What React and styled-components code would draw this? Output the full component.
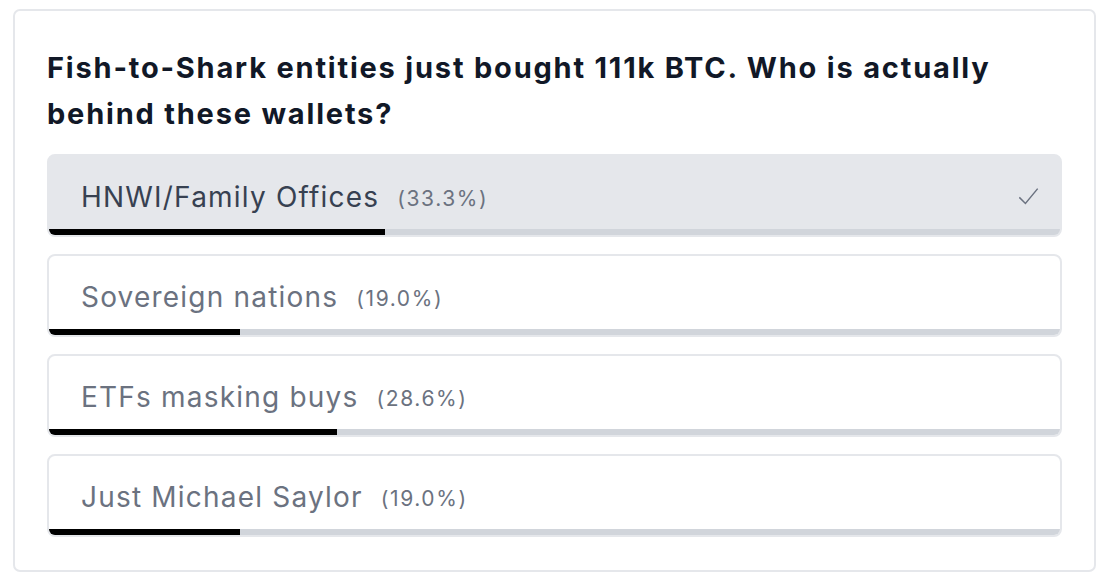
import React from 'react'
import styled, { createGlobalStyle } from 'styled-components'

const Global = createGlobalStyle`
    body {
        margin: 0;
        background: #fff;
        font-family: Inter, "Noto Sans", sans-serif;
    }
`;

const options = [
    { label: 'HNWI/Family Offices', pct: 33.3, chosen: true },
    { label: 'Sovereign nations', pct: 19.0 },
    { label: 'ETFs masking buys', pct: 28.6 },
    { label: 'Just Michael Saylor', pct: 19.0 },
];

export default function App() {
    return (
        <Page>
            <Global />
            <Card>
                <Title>Fish-to-Shark entities just bought 111k BTC. Who is actually behind these wallets?</Title>
                <List>
                    {options.map((o) => (
                        <Option key={o.label} chosen={o.chosen}>
                            <Row>
                                <Label chosen={o.chosen}>{o.label}</Label>
                                <Pct>({o.pct.toFixed(1)}%)</Pct>
                                {o.chosen && (
                                    <Check viewBox="0 0 24 24">
                                        <path d="M1.5 13l7 7L22.5 3" />
                                    </Check>
                                )}
                            </Row>
                            <Track>
                                <Fill style={{ width: o.pct + '%' }} />
                            </Track>
                        </Option>
                    ))}
                </List>
            </Card>
        </Page>
    )
}

const Page = styled.div`
    padding: 9px 14px 9px 13px;
`;

const Card = styled.div`
    border: 2px solid #e5e7eb;
    border-radius: 7px;
    padding: 32px 32px 33px 32px;
`;

const Title = styled.h2`
    margin: 2px 0 17px;
    max-width: 990px;
    font-size: 29px;
    line-height: 46px;
    font-weight: 700;
    letter-spacing: 1.8px;
    color: #111827;
`;

const List = styled.div`
    display: flex;
    flex-direction: column;
    gap: 17px;
`;

const Option = styled.div`
    border: 2px solid #e5e7eb;
    background: ${(p) => (p.chosen ? '#e5e7eb' : '#fff')};
    border-radius: 8px;
    overflow: hidden;
    display: flex;
    flex-direction: column;
    height: 83px;
    box-sizing: border-box;
`;

const Row = styled.div`
    flex: 1;
    display: flex;
    align-items: center;
    padding: 8px 20px 0 32px;
`;

const Label = styled.span`
    font-size: 28px;
    letter-spacing: 1.2px;
    color: ${(p) => (p.chosen ? '#374151' : '#6b7280')};
`;

const Pct = styled.span`
    margin-left: 18px;
    font-size: 21px;
    letter-spacing: 1.6px;
    color: #6b7280;
    padding-top: 3px;
`;

const Check = styled.svg`
    margin-left: auto;
    width: 23px;
    height: 21px;
    fill: none;
    stroke: #6b7280;
    stroke-width: 1.7;
`;

const Track = styled.div`
    height: 8px;
    background: #d1d5db;
    margin: 0 -2px -2px;
`;

const Fill = styled.div`
    height: 100%;
    background: #000;
    border-bottom-left-radius: 8px;
`;
